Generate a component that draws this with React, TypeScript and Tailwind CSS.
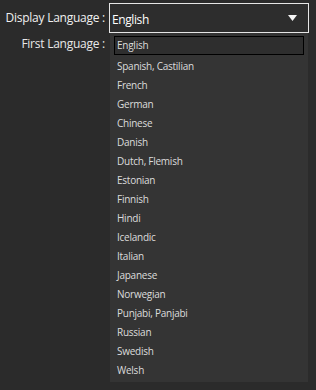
const languages = [
  "English",
  "Spanish, Castilian",
  "French",
  "German",
  "Chinese",
  "Danish",
  "Dutch, Flemish",
  "Estonian",
  "Finnish",
  "Hindi",
  "Icelandic",
  "Italian",
  "Japanese",
  "Norwegian",
  "Punjabi, Panjabi",
  "Russian",
  "Swedish",
  "Welsh",
]

export default function App() {
  return (
    <div
      className="w-[316px] h-[390px] bg-[#2b2b2b] relative overflow-hidden"
      style={{ fontFamily: '"Open Sans", "Noto Sans", sans-serif' }}
    >
      <div className="flex items-center pt-[3px]">
        <div className="w-[109px] pr-[4px] text-right text-[12px] tracking-[-0.25px] text-[#f0f0f0] leading-[30px] whitespace-nowrap">
          Display Language :
        </div>
        <div className="w-[200px] h-[30px] border border-[#e6e6e6] bg-[#2d2d2d] flex items-center pl-[2px] pr-[11px]">
          <span className="text-[12px] tracking-[-0.4px] text-white flex-1 leading-none pt-[4px]">English</span>
          <svg width="9" height="6" viewBox="0 0 9 6" className="mb-[1px]">
            <path d="M0 0 H9 L4.5 6 Z" fill="#f5f5f5" />
          </svg>
        </div>
      </div>

      <div className="flex">
        <div className="w-[109px] pr-[4px] text-right text-[12px] tracking-[-0.25px] text-[#e8e8e8] leading-[22px] whitespace-nowrap">
          First Language :
        </div>
      </div>

      {/* open dropdown list */}
      <div className="absolute left-[110px] top-[33px] w-[198px] h-[349px] bg-[#343434] pt-[3px] px-[4px]">
        {languages.map((lang, i) => (
          <div
            key={lang}
            className={
              "h-[19px] flex items-center pl-[2px] text-[10px] tracking-[-0.25px] text-[#dcdcdc] whitespace-nowrap " +
              (i === 0 ? "border border-black bg-[#2e2e2e] h-[17px] mb-[2px]" : "border border-transparent")
            }
          >
            {lang}
          </div>
        ))}
      </div>
    </div>
  )
}
